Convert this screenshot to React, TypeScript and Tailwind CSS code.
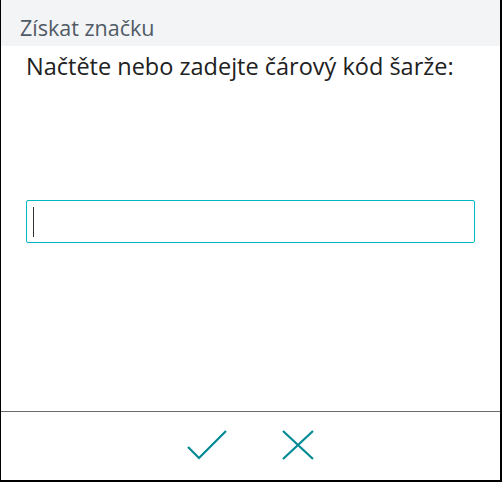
export default function App() {
  return (
    <div
      className="flex h-[482px] w-[502px] flex-col border-b-2 border-l border-r-2 border-black bg-white"
      style={{ fontFamily: '"Open Sans", "Noto Sans", sans-serif' }}
    >
      {/* Header */}
      <div className="h-[46px] bg-[#f3f4f5] pl-[19px] pt-[14px]">
        <span className="block text-[21.5px] leading-[28px] text-[#505a66]">Získat značku</span>
      </div>

      {/* Body */}
      <div className="flex flex-1 flex-col px-[25px]">
        <p className="mt-[4px] text-[23.5px] leading-[32px] text-[#212121]">
          Načtěte nebo zadejte čárový kód šarže:
        </p>
        <div className="mt-[118px] flex h-[43px] items-center rounded-[2px] border border-[#00b7c3] px-[6px]">
          <div className="h-[30px] w-px bg-[#333]" />
        </div>
      </div>

      {/* Footer */}
      <div className="flex h-[69px] items-center justify-center gap-[55px] border-t border-[#6b6b6b] pb-[2px]">
        <svg width="40" height="30" viewBox="0 0 40 30" fill="none">
          <path d="M1 17 L12 28 L39 1" stroke="#008a93" strokeWidth="2.2" />
        </svg>
        <svg width="32" height="30" viewBox="0 0 32 30" fill="none">
          <path d="M1 1 L31 29 M31 1 L1 29" stroke="#008a93" strokeWidth="2.2" />
        </svg>
      </div>
    </div>
  );
}
